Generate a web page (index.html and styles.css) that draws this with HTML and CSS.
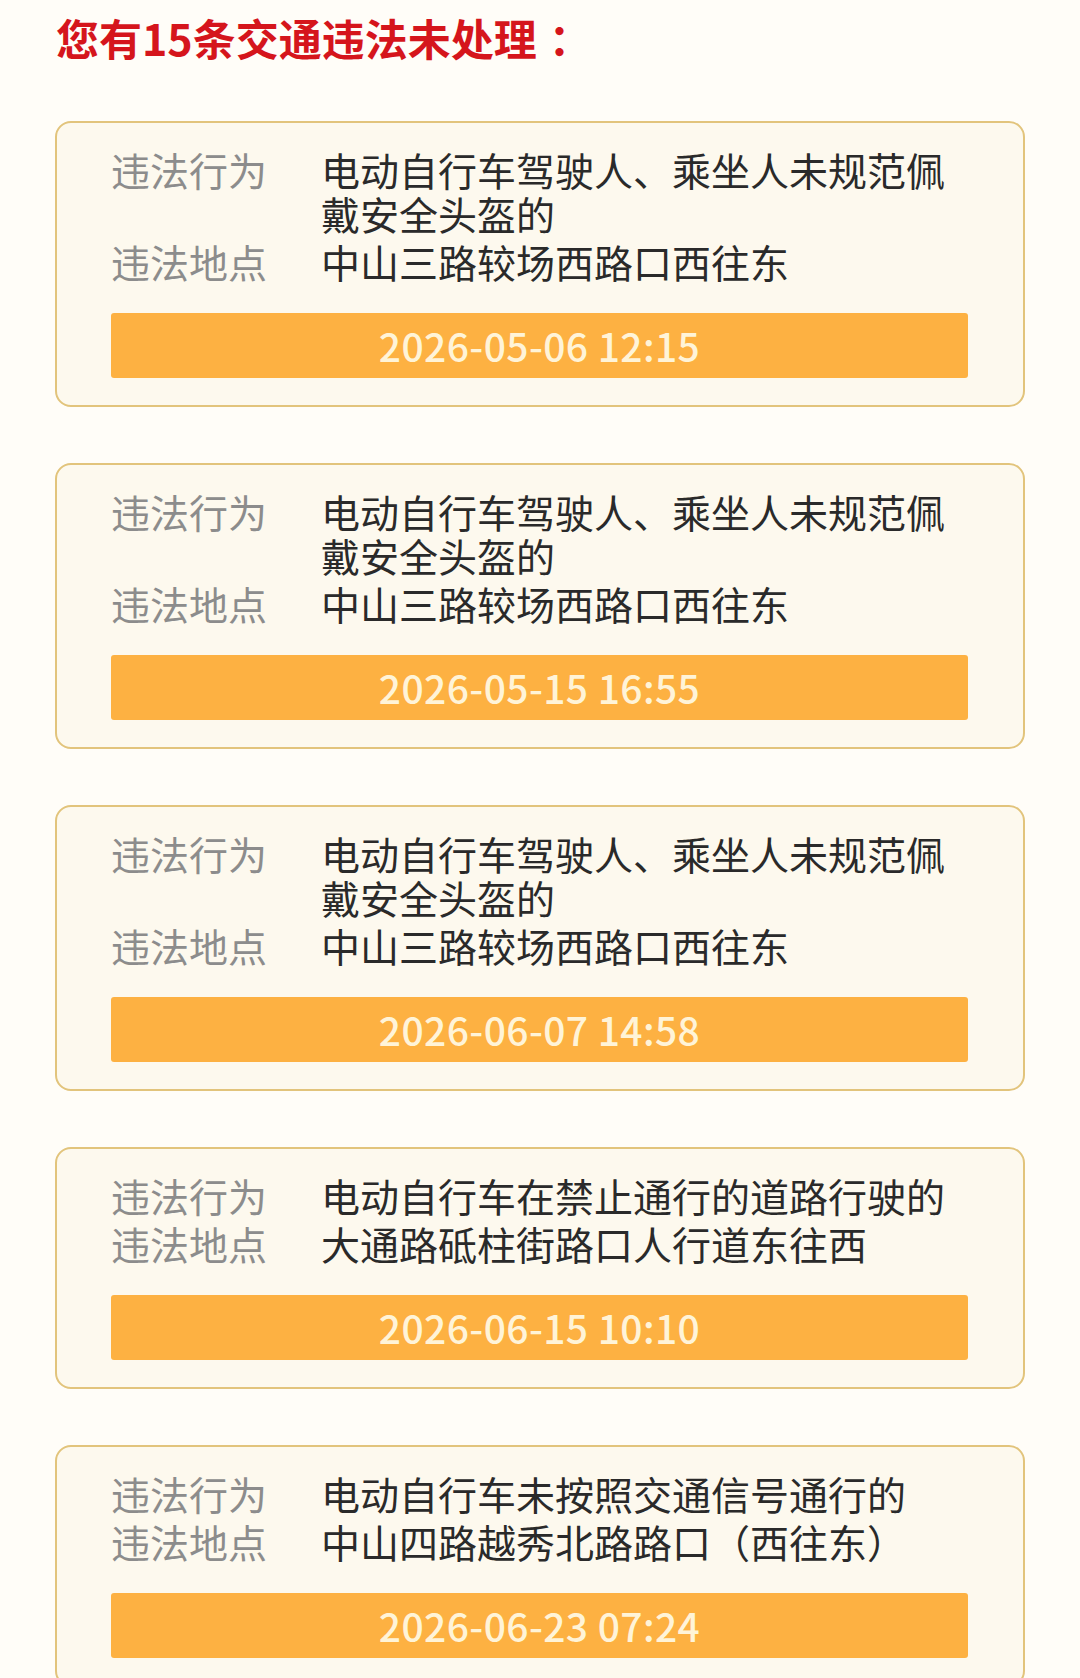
FILE: index.html
```html
<!DOCTYPE html>
<html lang="zh-CN">
<head>
    <meta charset="UTF-8">
    <meta name="viewport" content="width=device-width, initial-scale=1.0">
    <title>交通违法</title>
    <link rel="stylesheet" href="styles.css">
</head>
<body>
    <div class="page">
        <h1 class="title">您有15条交通违法未处理<span class="colon">：</span></h1>

        <div class="list">
            <div class="card">
                <div class="info">
                    <div class="label">违法行为</div>
                    <div class="value">电动自行车驾驶人、乘坐人未规范佩戴安全头盔的</div>
                    <div class="label">违法地点</div>
                    <div class="value">中山三路较场西路口西往东</div>
                </div>
                <div class="time">2026-05-06 12:15</div>
            </div>

            <div class="card">
                <div class="info">
                    <div class="label">违法行为</div>
                    <div class="value">电动自行车驾驶人、乘坐人未规范佩戴安全头盔的</div>
                    <div class="label">违法地点</div>
                    <div class="value">中山三路较场西路口西往东</div>
                </div>
                <div class="time">2026-05-15 16:55</div>
            </div>

            <div class="card">
                <div class="info">
                    <div class="label">违法行为</div>
                    <div class="value">电动自行车驾驶人、乘坐人未规范佩戴安全头盔的</div>
                    <div class="label">违法地点</div>
                    <div class="value">中山三路较场西路口西往东</div>
                </div>
                <div class="time">2026-06-07 14:58</div>
            </div>

            <div class="card">
                <div class="info">
                    <div class="label">违法行为</div>
                    <div class="value">电动自行车在禁止通行的道路行驶的</div>
                    <div class="label">违法地点</div>
                    <div class="value">大通路砥柱街路口人行道东往西</div>
                </div>
                <div class="time">2026-06-15 10:10</div>
            </div>

            <div class="card">
                <div class="info">
                    <div class="label">违法行为</div>
                    <div class="value">电动自行车未按照交通信号通行的</div>
                    <div class="label">违法地点</div>
                    <div class="value">中山四路越秀北路路口（西往东）</div>
                </div>
                <div class="time">2026-06-23 07:24</div>
            </div>
        </div>
    </div>
</body>
</html>
```

FILE: styles.css
```css
* {
    margin: 0;
    padding: 0;
    box-sizing: border-box;
}

body {
    font-family: "Noto Sans CJK SC", "Noto Sans", sans-serif;
    background: #fffdf8;
    color: #2a2a2a;
}

.page {
    padding: 11px 55px 40px;
}

.title {
    font-size: 43px;
    line-height: 52px;
    font-weight: 700;
    color: #d5151c;
    padding-left: 1px;
    margin-bottom: 58px;
}

.colon {
    margin-left: 12px;
}

.list {
    display: flex;
    flex-direction: column;
    gap: 56px;
}

.card {
    background: #fdf9ee;
    border: 2px solid #e2c47c;
    border-radius: 16px;
    padding: 24px 55px 27px 54px;
    display: flex;
    flex-direction: column;
    gap: 30px;
}

.info {
    display: grid;
    grid-template-columns: 210px 1fr;
    row-gap: 4px;
    padding-right: 6px;
    font-size: 39px;
    line-height: 44px;
}

.label {
    color: #8c8c8c;
}

.value {
    color: #2a2a2a;
}

.time {
    height: 65px;
    line-height: 65px;
    background: #fdb142;
    border-radius: 3px;
    text-align: center;
    font-size: 39px;
    font-weight: 500;
    letter-spacing: 0.4px;
    color: #fff4d8;
}
```
